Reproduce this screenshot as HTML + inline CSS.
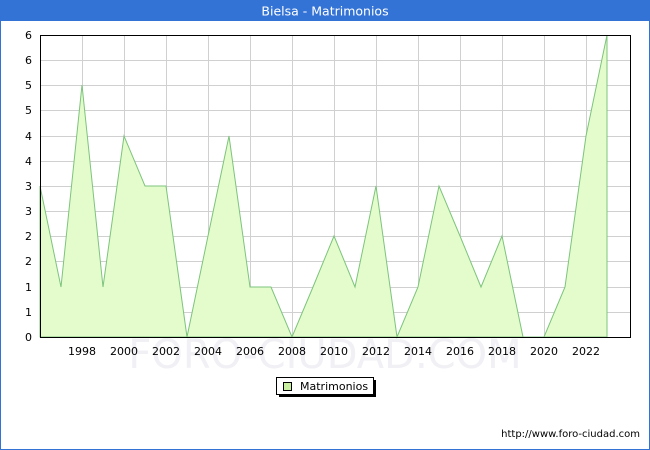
<!DOCTYPE html>
<html><head><style>
body{margin:0;width:650px;height:450px;overflow:hidden;background:#fff;font-family:"DejaVu Sans","Liberation Sans",sans-serif;}
</style></head><body>
<svg width="650" height="450" xmlns="http://www.w3.org/2000/svg" style="position:absolute;left:0;top:0">
<rect x="0.5" y="0.5" width="649" height="449" fill="#fff" stroke="#3473d6"/>
<rect x="0" y="0" width="650" height="21" fill="#3473d6"/>
<text x="325" y="15.5" fill="#fff" font-size="12.5" text-anchor="middle" font-family="DejaVu Sans, sans-serif">Bielsa - Matrimonios</text>
<g stroke="#d0d0d0" stroke-width="1">
<line x1="40" y1="60.5" x2="630" y2="60.5"/><line x1="40" y1="85.5" x2="630" y2="85.5"/><line x1="40" y1="110.5" x2="630" y2="110.5"/><line x1="40" y1="136.5" x2="630" y2="136.5"/><line x1="40" y1="161.5" x2="630" y2="161.5"/><line x1="40" y1="186.5" x2="630" y2="186.5"/><line x1="40" y1="211.5" x2="630" y2="211.5"/><line x1="40" y1="236.5" x2="630" y2="236.5"/><line x1="40" y1="261.5" x2="630" y2="261.5"/><line x1="40" y1="287.5" x2="630" y2="287.5"/><line x1="40" y1="312.5" x2="630" y2="312.5"/>
<line x1="82.5" y1="35" x2="82.5" y2="337"/><line x1="124.5" y1="35" x2="124.5" y2="337"/><line x1="166.5" y1="35" x2="166.5" y2="337"/><line x1="208.5" y1="35" x2="208.5" y2="337"/><line x1="250.5" y1="35" x2="250.5" y2="337"/><line x1="292.5" y1="35" x2="292.5" y2="337"/><line x1="334.5" y1="35" x2="334.5" y2="337"/><line x1="376.5" y1="35" x2="376.5" y2="337"/><line x1="418.5" y1="35" x2="418.5" y2="337"/><line x1="460.5" y1="35" x2="460.5" y2="337"/><line x1="502.5" y1="35" x2="502.5" y2="337"/><line x1="544.5" y1="35" x2="544.5" y2="337"/><line x1="586.5" y1="35" x2="586.5" y2="337"/>
</g>
<text x="325" y="368" fill="#f0f0f5" font-size="40" text-anchor="middle" font-family="DejaVu Sans, sans-serif">FORO-CIUDAD.COM</text>
<polygon fill="#e4fccc" stroke="#7cc47c" stroke-width="1" points="40,337 40,186 61,287 82,85 103,287 124,136 145,186 166,186 187,337 208,236 229,136 250,287 271,287 292,337 313,287 334,236 355,287 376,186 397,337 418,287 439,186 460,236 481,287 502,236 523,337 544,337 565,287 586,136 607,35 607,337"/>
<rect x="40.5" y="35.5" width="590" height="302" fill="none" stroke="#000"/>
<g font-size="11" fill="#000" text-anchor="end" font-family="DejaVu Sans, sans-serif">
<text x="32" y="341">0</text><text x="32" y="316">1</text><text x="32" y="291">1</text><text x="32" y="265">2</text><text x="32" y="240">2</text><text x="32" y="215">3</text><text x="32" y="190">3</text><text x="32" y="165">4</text><text x="32" y="140">4</text><text x="32" y="114">5</text><text x="32" y="89">5</text><text x="32" y="64">6</text><text x="32" y="39">6</text>
</g>
<g font-size="11" fill="#000" text-anchor="middle" font-family="DejaVu Sans, sans-serif">
<text x="82" y="355">1998</text><text x="124" y="355">2000</text><text x="166" y="355">2002</text><text x="208" y="355">2004</text><text x="250" y="355">2006</text><text x="292" y="355">2008</text><text x="334" y="355">2010</text><text x="376" y="355">2012</text><text x="418" y="355">2014</text><text x="460" y="355">2016</text><text x="502" y="355">2018</text><text x="544" y="355">2020</text><text x="586" y="355">2022</text>
</g>
<rect x="279" y="380" width="97" height="17" fill="#000"/>
<rect x="276.5" y="377.5" width="97" height="17" fill="#fff" stroke="#000"/>
<rect x="283.5" y="382.5" width="8" height="8" fill="#c8f0a0" stroke="#000"/>
<text x="300" y="390" font-size="11" font-family="DejaVu Sans, sans-serif">Matrimonios</text>
<text x="640" y="437" font-size="10" text-anchor="end" font-family="DejaVu Sans, sans-serif">http://www.foro-ciudad.com</text>
</svg>
</body></html>
